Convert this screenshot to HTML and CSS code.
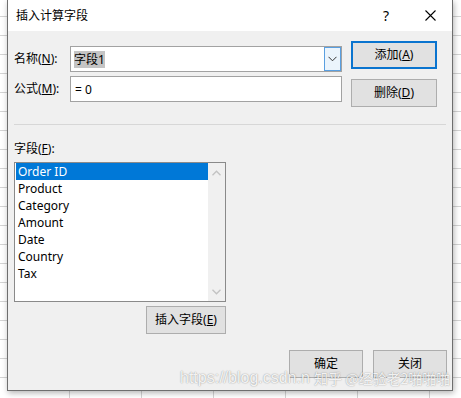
FILE: index.html
```html
<!DOCTYPE html>
<html lang="zh">
<head>
<meta charset="utf-8">
<title>插入计算字段</title>
<link rel="stylesheet" href="styles.css">
</head>
<body>
<div class="desk">
  <div class="dialog">
    <div class="titlebar">
      <span class="title">插入计算字段</span>
      <span class="tb-btn help">?</span>
      <span class="tb-btn close"><svg width="11" height="11" viewBox="0 0 11 11"><path d="M0.5 0.5 L10.5 10.5 M10.5 0.5 L0.5 10.5" stroke="#000" stroke-width="1.1" fill="none"/></svg></span>
    </div>
    <div class="body">
      <div class="top">
        <div class="fields">
          <div class="row">
            <span class="lab">名称(<u>N</u>):</span>
            <div class="combo">
              <span class="sel">字段1</span>
              <span class="drop"><svg width="9" height="6" viewBox="0 0 9 6"><path d="M0.5 0.8 L4.5 4.8 L8.5 0.8" stroke="#333" stroke-width="1" fill="none"/></svg></span>
            </div>
          </div>
          <div class="row">
            <span class="lab">公式(<u>M</u>):</span>
            <div class="textbox">= 0</div>
          </div>
        </div>
        <div class="actions">
          <button class="btn default">添加(<u>A</u>)</button>
          <button class="btn">删除(<u>D</u>)</button>
        </div>
      </div>
      <div class="sep"></div>
      <div class="fieldlist">
        <div class="lbl">字段(<u>F</u>):</div>
        <div class="listbox">
          <ul class="items">
            <li class="selected">Order ID</li>
            <li>Product</li>
            <li>Category</li>
            <li>Amount</li>
            <li>Date</li>
            <li>Country</li>
            <li>Tax</li>
          </ul>
          <div class="scroll">
            <svg width="9" height="6" viewBox="0 0 9 6"><path d="M0.5 5.2 L4.5 1.2 L8.5 5.2" stroke="#c2c2c2" stroke-width="1.3" fill="none"/></svg>
            <svg width="9" height="6" viewBox="0 0 9 6"><path d="M0.5 0.8 L4.5 4.8 L8.5 0.8" stroke="#c2c2c2" stroke-width="1.3" fill="none"/></svg>
          </div>
        </div>
        <button class="btn insert">插入字段(<u>E</u>)</button>
      </div>
      <div class="footer">
        <button class="btn foot">确定</button>
        <button class="btn foot">关闭</button>
      </div>
    </div>
  </div>
  <div class="watermark wm-url">https://blog.csdn.n</div>
  <div class="watermark wm-zh">知乎 @经验老2啪啪啪</div>
</div>
</body>
</html>
```
FILE: styles.css
```css
* { box-sizing: border-box; }
html, body { margin: 0; padding: 0; }
body {
  width: 461px;
  height: 398px;
  overflow: hidden;
  font-family: "Noto Sans", "Noto Sans CJK SC", sans-serif;
  font-size: 12px;
  color: #000;
  background-color: #fff;
  background-image:
    repeating-linear-gradient(to bottom, transparent 0 18px, #d4d4d4 18px 19px),
    repeating-linear-gradient(to right, transparent 0 71px, #d4d4d4 71px 72px);
  background-position: 0 -2px, -2px 0;
}
.desk {
  position: relative;
  height: 398px;
  padding-left: 7px;
  overflow: hidden;
}
.dialog {
  width: 446px;
  height: 391px;
  border: 1px solid #6e6e6e;
  border-top: 0;
  background: #f0f0f0;
  display: flex;
  flex-direction: column;
  box-shadow: 1px 2px 6px rgba(0, 0, 0, 0.3);
}
.titlebar {
  height: 31px;
  background: #fff;
  display: flex;
  align-items: center;
  flex-shrink: 0;
}
.title {
  flex: 1;
  padding-left: 8px;
  line-height: 16px;
  font-size: 12px;
}
.tb-btn {
  width: 44px;
  height: 31px;
  display: flex;
  align-items: center;
  justify-content: center;
}
.help {
  font-size: 14px;
  line-height: 16px;
}
.body {
  flex: 1;
  display: flex;
  flex-direction: column;
  padding: 0 0 12px 6px;
}
.top {
  display: flex;
}
.fields {
  width: 328px;
  padding-top: 15px;
  display: flex;
  flex-direction: column;
  gap: 4px;
}
.row {
  display: flex;
  align-items: center;
  height: 26px;
}
.lab {
  width: 56px;
  line-height: 16px;
}
u { text-decoration: underline; text-underline-offset: 1px; }
.combo, .textbox {
  width: 272px;
  height: 26px;
  border: 1px solid #a2a2a2;
  background: #fff;
  display: flex;
  align-items: center;
  padding-left: 3px;
}
.textbox { padding-left: 4px; }
.sel {
  background: #c4c4c4;
  line-height: 17px;
  height: 17px;
}
.drop {
  margin-left: auto;
  width: 17px;
  height: 24px;
  border: 1px solid #5a9fe0;
  background: #ebf4fc;
  display: flex;
  align-items: center;
  justify-content: center;
}
.actions {
  margin-left: 9px;
  padding-top: 10px;
  display: flex;
  flex-direction: column;
  gap: 10px;
}
.btn {
  width: 86px;
  height: 28px;
  background: #e1e1e1;
  border: 1px solid #adadad;
  font-family: inherit;
  font-size: 12px;
  line-height: 16px;
  color: #000;
  padding: 0;
  margin: 0;
}
.btn.default {
  border: 2px solid #0a74cf;
}
.sep {
  margin-top: 17px;
  width: 432px;
  height: 1px;
  background: #d7d7d7;
}
.fieldlist {
  width: 212px;
  display: flex;
  flex-direction: column;
}
.lbl {
  margin-top: 16px;
  line-height: 16px;
}
.listbox {
  margin-top: 5px;
  width: 212px;
  height: 140px;
  border: 1px solid #8a8a8a;
  background: #fff;
  display: flex;
}
.items {
  list-style: none;
  margin: 0;
  padding: 0 0 0 1px;
  flex: 1;
}
.items li {
  height: 17px;
  line-height: 17px;
  padding-left: 2px;
  font-size: 12px;
}
.items li.selected {
  background: #0078d7;
  color: #fff;
}
.scroll {
  width: 17px;
  background: #f0f0f0;
  display: flex;
  flex-direction: column;
  justify-content: space-between;
  align-items: center;
  padding: 7px 0 6px;
}
.scroll svg { display: block; }
.btn.insert {
  margin-top: 4px;
  width: 80px;
  align-self: flex-end;
}
.footer {
  margin-top: auto;
  display: flex;
  justify-content: flex-end;
  gap: 10px;
  padding-right: 5px;
}
.btn.foot {
  width: 74px;
}
.watermark {
  position: absolute;
  white-space: nowrap;
  color: rgba(255, 255, 255, 0.9);
  text-shadow: 0 0 1px rgba(0, 0, 0, 0.3), 0 0 2px rgba(0, 0, 0, 0.2);
}
.wm-url {
  left: 180px;
  top: 368px;
  font-family: "Liberation Sans", sans-serif;
  font-size: 16px;
  line-height: 20px;
}
.wm-zh {
  left: 314px;
  top: 369px;
  font-family: "Noto Sans CJK SC", sans-serif;
  font-size: 14px;
  line-height: 18px;
}
```
